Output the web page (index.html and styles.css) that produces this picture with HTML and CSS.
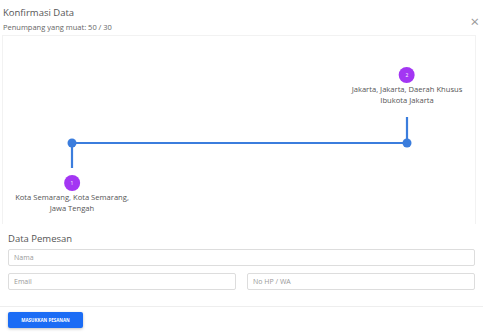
FILE: index.html
```html
<!DOCTYPE html>
<html lang="id">
  <head>
    <meta charset="UTF-8" />
    <meta name="viewport" content="width=device-width, initial-scale=1.0" />
    <title>Konfirmasi Data</title>
    <link rel="stylesheet" href="styles.css">
  </head>
  <body>
    <div class="modal">
      <div class="modal-header">
        <div>
          <h3 class="modal-title">Konfirmasi Data</h3>
          <div class="modal-sub">Penumpang yang muat: 50 / 30</div>
        </div>
        <span class="close">&times;</span>
      </div>

      <div class="route-map">
        <svg class="route-lines" width="474" height="188" viewBox="0 0 474 188">
          <path d="M69 132 V107 H404 V81" fill="none" stroke="#3b7ddd" stroke-width="2.2" />
          <circle cx="69" cy="107" r="4.5" fill="#3b7ddd" />
          <circle cx="404" cy="107" r="4.5" fill="#3b7ddd" />
        </svg>
        <div class="pin pin-start">
          <span class="pin-num">1</span>
          <span class="pin-label">Kota Semarang, Kota Semarang,<br>Jawa Tengah</span>
        </div>
        <div class="pin pin-end">
          <span class="pin-num">2</span>
          <span class="pin-label">Jakarta, Jakarta, Daerah Khusus<br>Ibukota Jakarta</span>
        </div>
      </div>

      <form class="form">
        <h4 class="form-title">Data Pemesan</h4>
        <input type="text" placeholder="Nama" />
        <div class="row">
          <input type="text" placeholder="Email" />
          <input type="text" placeholder="No HP / WA" />
        </div>
      </form>

      <div class="modal-footer">
        <button type="button">Masukkan Pesanan</button>
      </div>
    </div>
  </body>
</html>
```

FILE: styles.css
```css
/* Reset dan dasar */
body {
  font-family: "Open Sans", "Liberation Sans", sans-serif;
  margin: 0;
  padding: 0;
  background-color: #fff;
  color: #555;
}

.modal {
  width: 483px;
}

/* Header modal */
.modal-header {
  display: flex;
  justify-content: space-between;
  align-items: center;
  padding: 3px 4px 0 3px;
  height: 32px;
}
.modal-title {
  margin: 0;
  font-size: 9.5px;
  font-weight: 400;
  color: #555;
  line-height: 14px;
}
.modal-sub {
  font-size: 7.5px;
  color: #666;
  margin-top: 2px;
}
.close {
  font-size: 15px;
  color: #999;
  line-height: 1;
  margin-top: 4px;
}

/* Peta rute */
.route-map {
  position: relative;
  height: 188px;
  margin: 0 7px 0 2px;
  border: 1px solid #f2f2f2;
  border-bottom: none;
}
.route-lines {
  display: block;
}
.pin {
  position: absolute;
  display: flex;
  flex-direction: column;
  align-items: center;
  transform: translateX(-50%);
}
.pin-start {
  left: 69px;
  top: 139px;
}
.pin-end {
  left: 404px;
  top: 31px;
}
.pin-num {
  width: 16px;
  height: 16px;
  border-radius: 50%;
  background-color: #a336f3;
  color: #fff;
  font-size: 5px;
  display: flex;
  align-items: center;
  justify-content: center;
}
.pin-label {
  font-size: 7.6px;
  line-height: 11px;
  color: #555;
  text-align: center;
  white-space: nowrap;
  margin-top: 1px;
}

/* Form pemesan */
.form {
  margin: 0;
  padding: 6px 8px 16px 8px;
  display: flex;
  flex-direction: column;
  gap: 7px;
}
.form-title {
  margin: 2px 0 -3px;
  font-size: 9.5px;
  font-weight: 400;
  color: #555;
  line-height: 13px;
}
.row {
  display: flex;
  gap: 11px;
}
.row input {
  flex: 1;
}
input[type="text"] {
  height: 17px;
  padding: 0 5px;
  border: 1px solid #ddd;
  border-radius: 2px;
  font-family: inherit;
  font-size: 7px;
  color: #555;
  box-sizing: border-box;
  min-width: 0;
}
input::placeholder {
  color: #999;
}

/* Footer */
.modal-footer {
  display: flex;
  border-top: 1px solid #eee;
  padding: 5px 8px;
}
button {
  background-color: #1b6cf5;
  color: #fff;
  border: none;
  border-radius: 2px;
  width: 75px;
  height: 16px;
  font-family: inherit;
  font-size: 4.5px;
  font-weight: 700;
  text-transform: uppercase;
  box-shadow: 0 1px 3px rgba(0, 0, 0, 0.25);
  padding: 0;
}
```
